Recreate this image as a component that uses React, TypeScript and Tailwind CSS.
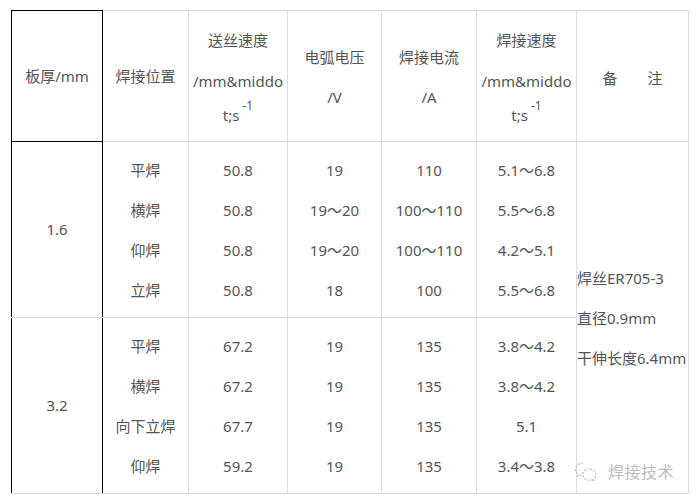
const line = "h-5 leading-5 whitespace-nowrap";

function Lines({ items }: { items: string[] }) {
  return (
    <div className="flex flex-col items-center gap-5">
      {items.map((t, i) => (
        <div key={i} className={line}>
          {t}
        </div>
      ))}
    </div>
  );
}

function Unit() {
  return (
    <>
      <div className={`${line} mt-[21px]`}>/mm&amp;middo</div>
      <div className={`${line} mt-[14px]`}>
        t;s
        <sup className="ml-[3px] text-[12px] -top-[11px]">-1</sup>
      </div>
    </>
  );
}

const groups = [
  {
    thick: "1.6",
    pos: ["平焊", "横焊", "仰焊", "立焊"],
    feed: ["50.8", "50.8", "50.8", "50.8"],
    volt: ["19", "19～20", "19～20", "18"],
    amp: ["110", "100～110", "100～110", "100"],
    speed: ["5.1～6.8", "5.5～6.8", "4.2～5.1", "5.5～6.8"],
  },
  {
    thick: "3.2",
    pos: ["平焊", "横焊", "向下立焊", "仰焊"],
    feed: ["67.2", "67.2", "67.7", "59.2"],
    volt: ["19", "19", "19", "19"],
    amp: ["135", "135", "135", "135"],
    speed: ["3.8～4.2", "3.8～4.2", "5.1", "3.4～3.8"],
  },
];

const gray = "border border-[#dcdcdc]";

export default function App() {
  return (
    <div className="relative min-h-[504px] w-[697px] bg-white pl-[11px] pt-[10px] font-['Noto_Sans','Noto_Sans_CJK_SC',sans-serif] text-[15px] text-[#555]">
      <table className="w-[677px] table-fixed border-collapse text-center">
        <colgroup>
          <col className="w-[91px]" />
          <col className="w-[86px]" />
          <col className="w-[99px]" />
          <col className="w-[94px]" />
          <col className="w-[95px]" />
          <col className="w-[100px]" />
          <col className="w-[112px]" />
        </colgroup>
        <tbody>
          <tr className="h-[131px]">
            <td className="border border-black p-0 align-middle">板厚/mm</td>
            <td className={`${gray} p-0 align-middle`}>焊接位置</td>
            <td className={`${gray} p-0 pt-[19px] align-top`}>
              <div className={line}>送丝速度</div>
              <Unit />
            </td>
            <td className={`${gray} p-0 pt-[36px] align-top`}>
              <div className={line}>电弧电压</div>
              <div className={`${line} mt-5`}>/V</div>
            </td>
            <td className={`${gray} p-0 pt-[36px] align-top`}>
              <div className={line}>焊接电流</div>
              <div className={`${line} mt-5`}>/A</div>
            </td>
            <td className={`${gray} p-0 pt-[19px] align-top`}>
              <div className={line}>焊接速度</div>
              <Unit />
            </td>
            <td className={`${gray} p-0 pt-[5px] align-middle`}>
              <div className="flex justify-center gap-[30px]">
                <span>备</span>
                <span>注</span>
              </div>
            </td>
          </tr>
          {groups.map((g, gi) => (
            <tr key={g.thick} className="h-[176px]">
              <td className="border border-x-black border-y-[#dcdcdc] p-0 align-middle">{g.thick}</td>
              <td className={`${gray} p-0 align-middle`}>
                <Lines items={g.pos} />
              </td>
              <td className={`${gray} p-0 align-middle`}>
                <Lines items={g.feed} />
              </td>
              <td className={`${gray} p-0 align-middle`}>
                <Lines items={g.volt} />
              </td>
              <td className={`${gray} p-0 align-middle`}>
                <Lines items={g.amp} />
              </td>
              <td className={`${gray} p-0 align-middle`}>
                <Lines items={g.speed} />
              </td>
              {gi === 0 && (
                <td rowSpan={2} className={`${gray} p-0 text-left align-middle`}>
                  <div className="flex flex-col gap-5">
                    <div className={line}>焊丝ER705-3</div>
                    <div className={line}>直径0.9mm</div>
                    <div className={line}>干伸长度6.4mm</div>
                  </div>
                </td>
              )}
            </tr>
          ))}
        </tbody>
      </table>

      {/* watermark */}
      <div className="absolute left-[574px] top-[461px] flex items-center gap-[10px] text-[#bdbdbd]">
        <svg width="24" height="22" viewBox="0 0 24 22" fill="none" stroke="#bdbdbd" strokeWidth="1.2" strokeDasharray="2 1.5">
          <path d="M9 2C4.6 2 1.5 4.8 1.5 8.2c0 2 1.1 3.6 2.8 4.7l-.7 2.3 2.7-1.4c.9.3 1.8.4 2.7.4" />
          <path d="M15.5 8c-3.8 0-6.8 2.5-6.8 5.6s3 5.6 6.8 5.6c.8 0 1.5-.1 2.2-.3l2.3 1.2-.6-2c1.6-1 2.6-2.6 2.6-4.5C22 10.5 19.2 8 15.5 8z" />
        </svg>
        <span className="text-[16px] leading-5 tracking-[0.5px]">焊接技术</span>
      </div>
    </div>
  );
}
